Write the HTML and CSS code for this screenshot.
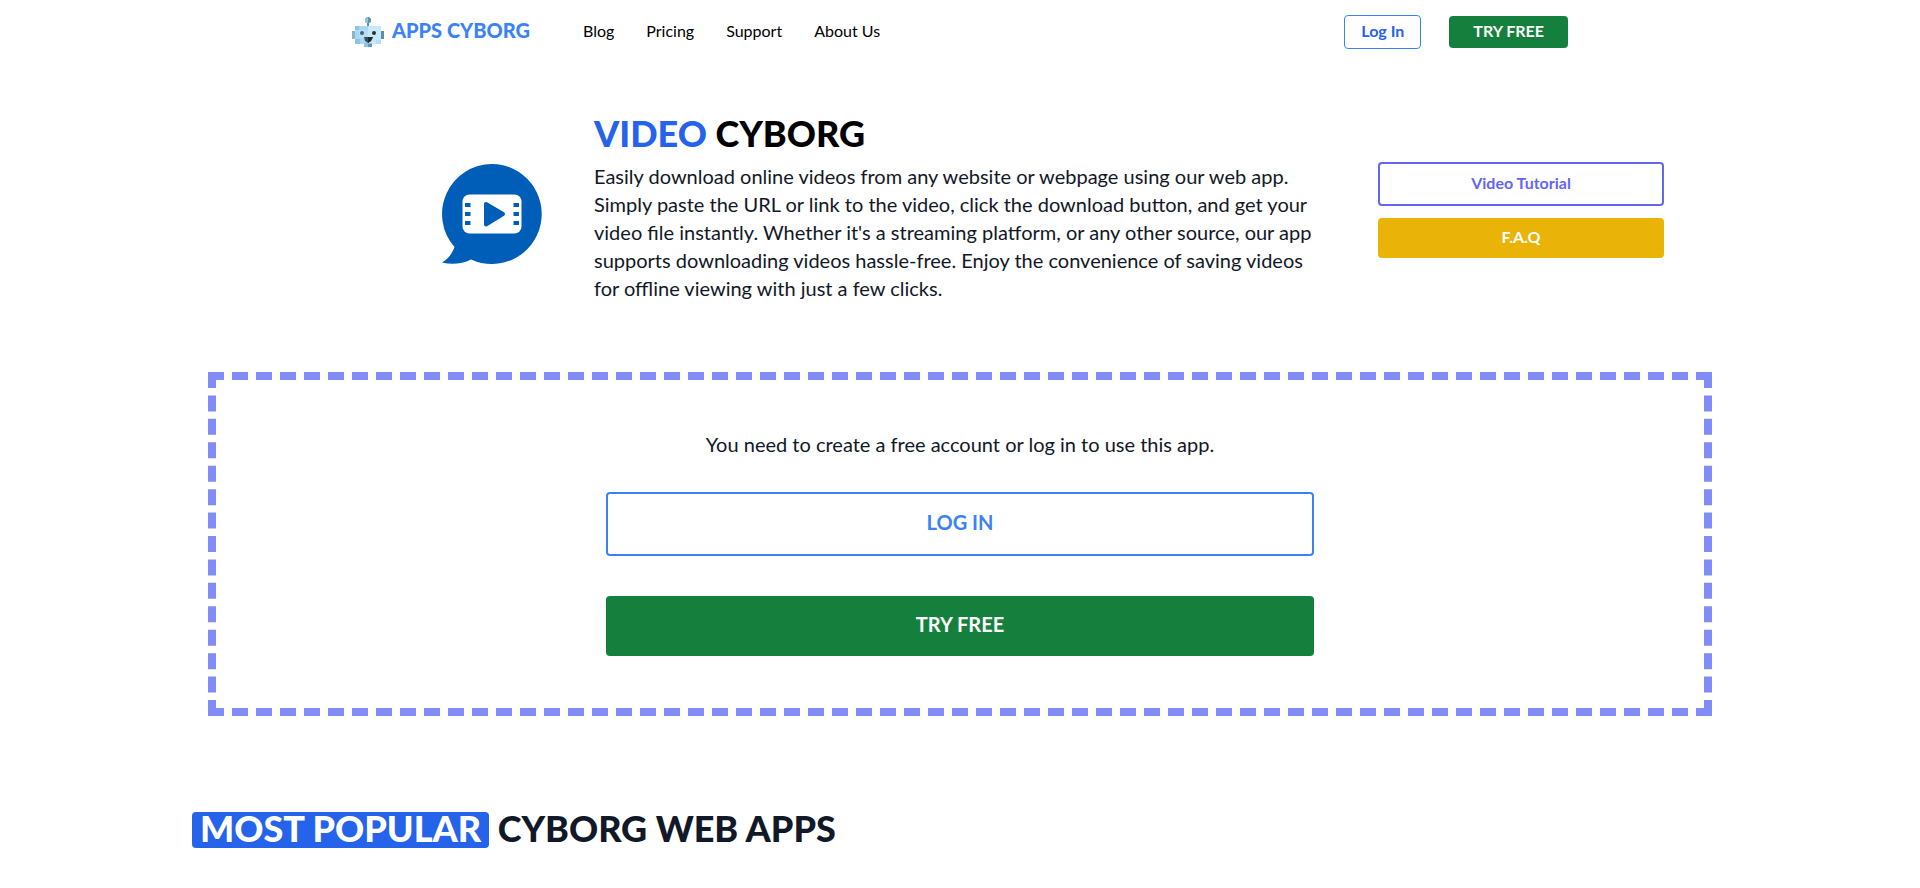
FILE: index.html
```html
<!DOCTYPE html>
<html lang="en">
<head>
    <meta charset="UTF-8">
    <meta name="viewport" content="width=device-width, initial-scale=1.0">
    <title>Video Cyborg</title>
    <link rel="stylesheet" href="styles.css">
</head>
<body>
    <!-- Top navigation -->
    <header class="navbar">
        <a href="#" class="brand">
            <svg class="brand-logo" viewBox="0 0 32 32" aria-hidden="true">
                <path fill="#5b93b5" d="M13 3l2-2h2l2 2v3l-2 1v4h-2V7l-2-1z"/>
                <path fill="#8fc3e0" d="M13 3l2-2h1v6h-1l-2-1z"/>
                <path fill="#8db4cc" d="M0 15h3v8H0z"/>
                <path fill="#5f8aa8" d="M29 15h3v8h-3z"/>
                <path fill="#a9d7f2" d="M3 10h13v18H3z"/>
                <path fill="#c6e8fa" d="M16 10h13v18H16z"/>
                <path fill="#8cc4e8" d="M3 10h4v4H3zM3 23h5v5H3zM12 27h8v4h-8z"/>
                <path fill="#b4def5" d="M7 14h9v8H7zM24 24h5v4h-5z"/>
                <path fill="#5c9ac4" d="M16 28h4v3h-4z"/>
                <circle fill="#4c5f70" cx="10" cy="17" r="2"/>
                <circle fill="#263238" cx="22" cy="17" r="2"/>
                <path fill="#3b4d5c" d="M12 21h9l-2 4-3 2-3-2z"/>
                <path fill="#1f2a33" d="M16 21h5l-2 4-3 2z"/>
            </svg>
            <span>APPS CYBORG</span>
        </a>
        <nav class="nav-links">
            <a href="#">Blog</a>
            <a href="#">Pricing</a>
            <a href="#">Support</a>
            <a href="#">About Us</a>
        </nav>
        <div class="nav-actions">
            <a href="#" class="btn nav-login">Log In</a>
            <a href="#" class="btn nav-try">TRY FREE</a>
        </div>
    </header>

    <main class="page">
        <!-- App intro -->
        <section class="hero">
            <svg class="hero-icon" viewBox="0 0 100 100" aria-hidden="true">
                <path fill="#005eb8" d="M50 0a50 50 0 1 1-21 95.500C20 100 10 101 0 98.500C6 95 10 90 12.500 83A50 50 0 0 1 50 0z"/>
                <rect x="20.500" y="30.500" width="59" height="39" rx="7" fill="#fff"/>
                <path fill="#005eb8" d="M23 39h5.500v4H23zM23 48h5.500v4H23zM23 57h5.500v4H23zM71.500 39H77v4h-5.500zM71.500 48H77v4h-5.500zM71.500 57H77v4h-5.500z"/>
                <path fill="#005eb8" stroke="#005eb8" stroke-width="4" stroke-linejoin="round" d="M44 40v20.500L61 50z"/>
            </svg>
            <div class="hero-text">
                <h1><span class="blue">VIDEO</span> CYBORG</h1>
                <p>Easily download online videos from any website or webpage using our web app. Simply paste the URL or link to the video, click the download button, and get your video file instantly. Whether it's a streaming platform, or any other source, our app supports downloading videos hassle-free. Enjoy the convenience of saving videos for offline viewing with just a few clicks.</p>
            </div>
            <div class="hero-actions">
                <a href="#" class="btn tutorial">Video Tutorial</a>
                <a href="#" class="btn faq">F.A.Q</a>
            </div>
        </section>

        <!-- Account needed -->
        <section class="account-box">
            <p>You need to create a free account or log in to use this app.</p>
            <a href="#" class="btn big login">LOG IN</a>
            <a href="#" class="btn big try">TRY FREE</a>
        </section>

        <h2 class="popular"><mark>MOST POPULAR</mark> CYBORG WEB APPS</h2>
    </main>
</body>
</html>
```

FILE: styles.css
```css
* {
    box-sizing: border-box;
}
body {
    margin: 0;
    font-family: Lato, sans-serif;
    font-size: 16px;
    line-height: 24px;
    color: #111827;
    background-color: #fff;
}
h1, h2, p {
    margin: 0;
}
a {
    color: inherit;
    text-decoration: none;
}
.navbar {
    display: flex;
    align-items: center;
    max-width: 1280px;
    height: 64px;
    margin: 0 auto;
    padding: 0 32px;
    color: #000;
}
.brand {
    display: flex;
    align-items: center;
    gap: 8px;
    color: #3b82f6;
    font-size: 20px;
    font-weight: 900;
}
.brand span {
    padding-bottom: 4px;
}
.brand-logo {
    width: 32px;
    height: 32px;
}
.nav-links {
    display: flex;
    gap: 32px;
    margin-left: 53px;
    padding-bottom: 2px;
}
.nav-actions {
    display: flex;
    align-items: center;
    gap: 28px;
    margin-left: auto;
}
.btn {
    display: block;
    border-radius: 4px;
    font-weight: 700;
    text-align: center;
}
.nav-login,
.nav-try {
    padding: 3px 16px 5px;
}
.nav-login {
    border: 1px solid #3b82f6;
    color: #2563eb;
}
.nav-try {
    padding-left: 24px;
    padding-right: 24px;
    background-color: #15803d;
    color: #fff;
}
.page {
    max-width: 1536px;
    margin: 0 auto;
}
.hero {
    display: grid;
    grid-template-columns: 286px 1fr 286px;
    gap: 52px;
    align-items: center;
    padding: 46px 64px 62px;
}
.hero-icon {
    width: 100px;
    height: 100px;
    margin-top: 8px;
    justify-self: end;
}
.hero-text {
    padding-bottom: 8px;
}
.hero-text h1 {
    margin-bottom: 6px;
    color: #000;
    font-size: 36px;
    font-weight: 900;
    line-height: 46px;
}
.hero-text .blue {
    color: #2563eb;
}
.hero-text p,
.account-box p {
    font-size: 20px;
    line-height: 28px;
}
.hero-actions {
    display: flex;
    flex-direction: column;
    gap: 12px;
}
.tutorial,
.faq {
    padding: 7px 8px 9px;
}
.tutorial {
    border: 2px solid #6366f1;
    color: #6366f1;
}
.faq {
    background-color: #eab308;
    color: #fff;
}
/* Dashed box */
.account-box {
    display: flex;
    flex-direction: column;
    align-items: center;
    margin: 0 16px;
    padding: 50px 36px 52px;
    border: 8px dashed #818cf8;
}
.big {
    width: 50%;
    padding: 14px 16px 18px;
    font-size: 20px;
    line-height: 28px;
}
.login {
    margin: 34px 0 40px;
    border: 2px solid #3b82f6;
    color: #3b82f6;
}
.try {
    background-color: #15803d;
    color: #fff;
}
.popular {
    margin-top: 92px;
    padding-bottom: 40px;
    font-size: 36px;
    font-weight: 900;
    line-height: 40px;
}
.popular mark {
    display: inline-block;
    padding: 0 8px 4px;
    border-radius: 4px;
    background-color: #2563eb;
    color: #fff;
    line-height: 32px;
}
```
